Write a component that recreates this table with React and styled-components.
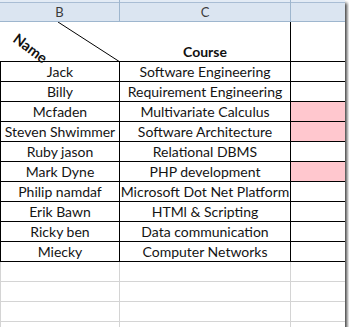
import { Fragment } from "react";
import styled, { createGlobalStyle } from "styled-components";

const GlobalStyle = createGlobalStyle`
  html, body {
    margin: 0;
    padding: 0;
    background: #ffffff;
  }
  body {
    font-family: Lato, "Open Sans", sans-serif;
  }
`;

const Sheet = styled.div`
  width: 345px;
  height: 327px;
  overflow: hidden;
  background: #ffffff;
  box-shadow: 2px 3px 3px rgba(0, 0, 0, 0.75);
  display: grid;
  grid-template-columns: 120px 171px 54px;
  grid-auto-rows: 20px;
  grid-template-rows: 22px 40px;
`;

const ColLabel = styled.div`
  box-sizing: border-box;
  height: 22px;
  background: linear-gradient(
    to bottom,
    #e3ebf5 0,
    #e3ebf5 2px,
    #a9bdd4 2px,
    #a9bdd4 3px,
    #dbe5f1 3px
  );
  border-bottom: 1px solid #9eb6ce;
  border-right: ${(p) => (p.$last ? "none" : "1px solid #9eb6ce")};
  color: #3b3b3b;
  font-size: 13px;
  display: flex;
  align-items: center;
  justify-content: center;
  padding-top: 2px;
`;

const TitleCell = styled.div`
  position: relative;
  box-sizing: border-box;
  border-bottom: 1px solid #000;
  border-right: ${(p) => (p.$edge ? "1px solid #000" : "none")};
  font-weight: 700;
  font-size: 14px;
  color: #111;
  display: flex;
  align-items: flex-end;
  justify-content: center;
  padding-bottom: 1px;
`;

const Diagonal = styled.svg`
  position: absolute;
  left: 0;
  top: 0;
  width: 120px;
  height: 40px;
`;

const SlantLabel = styled.span`
  position: absolute;
  left: 15px;
  top: 7px;
  font-size: 14.5px;
  font-weight: 700;
  line-height: 16px;
  transform: rotate(37deg);
  transform-origin: left center;
`;

const Cell = styled.div`
  box-sizing: border-box;
  border-bottom: 1px solid ${(p) => (p.$blank ? "#d4d4d4" : "#000")};
  border-right: ${(p) =>
    p.$edge ? "none" : `1px solid ${p.$blank ? "#d4d4d4" : "#000"}`};
  border-left: ${(p) =>
    p.$first ? `1px solid ${p.$blank ? "#d4d4d4" : "#000"}` : "none"};
  background: ${(p) => (p.$pink ? "#ffc7ce" : "#ffffff")};
  font-size: 14px;
  color: #141414;
  white-space: nowrap;
  overflow: hidden;
  display: flex;
  align-items: center;
  justify-content: center;
  line-height: 1;
`;

const students = [
  { name: "Jack", course: "Software Engineering" },
  { name: "Billy", course: "Requirement Engineering" },
  { name: "Mcfaden", course: "Multivariate Calculus", flag: true },
  { name: "Steven Shwimmer", course: "Software Architecture", flag: true },
  { name: "Ruby jason", course: "Relational DBMS" },
  { name: "Mark Dyne", course: "PHP development", flag: true },
  { name: "Philip namdaf", course: "Microsoft Dot Net Platform" },
  { name: "Erik Bawn", course: "HTMl & Scripting" },
  { name: "Ricky ben", course: "Data communication" },
  { name: "Miecky", course: "Computer Networks" },
];

export default function App() {
  return (
    <>
      <GlobalStyle />
      <Sheet>
        <ColLabel>B</ColLabel>
        <ColLabel>C</ColLabel>
        <ColLabel $last />

        <TitleCell>
          <Diagonal viewBox="0 0 120 40">
            <line x1="58" y1="0" x2="120" y2="40" stroke="#000" strokeWidth="1" />
          </Diagonal>
          <SlantLabel>Name</SlantLabel>
        </TitleCell>
        <TitleCell $edge>Course</TitleCell>
        <TitleCell />

        {students.map((s) => (
          <Fragment key={s.name}>
            <Cell $first>{s.name}</Cell>
            <Cell>{s.course}</Cell>
            <Cell $edge $pink={s.flag} />
          </Fragment>
        ))}

        {[0, 1, 2, 3].map((i) => (
          <Fragment key={i}>
            <Cell $first $blank />
            <Cell $blank />
            <Cell $edge $blank />
          </Fragment>
        ))}
      </Sheet>
    </>
  );
}
